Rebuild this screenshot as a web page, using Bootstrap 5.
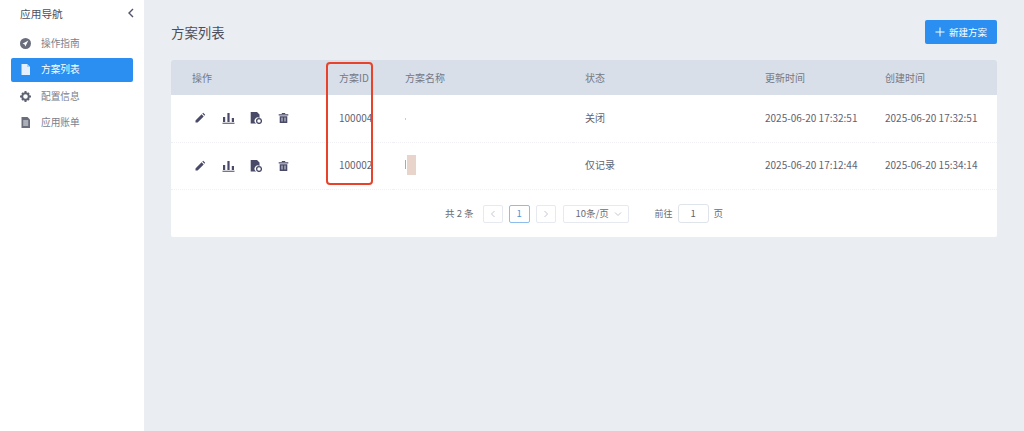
<!DOCTYPE html>
<html lang="zh-CN">
<head>
<meta charset="utf-8">
<title>方案列表</title>
<link href="https://cdn.jsdelivr.net/npm/bootstrap@5.3.0/dist/css/bootstrap.min.css" rel="stylesheet">
<style>
html,body{height:431px;overflow:hidden}
body{background:#eaeef3;font-family:"Noto Sans CJK SC","Noto Sans",sans-serif;font-size:10px;color:#5f6270}
.side-pane{width:144px;height:431px;background:#fff;flex:none}
.side-head{height:31px;padding:0 9px 3px 20px;color:#4d5060;font-size:10.7px}
.side-head svg{margin-top:-3px}
.side-menu{padding:0 11px}
.side-item{height:24px;padding-left:9px;gap:10px;border-radius:2px;color:#7b7e8a;font-size:9.7px;text-decoration:none;margin-bottom:2.5px}
.side-item.on{background:#2a8ff0;color:#fff}
.main-pane{padding:20px 27px 0 27px;position:relative;min-width:0}
.page-title{font-size:13.4px;color:#4a4d5c;font-weight:400;margin:0;line-height:24px}
.add-btn{width:72px;height:24px;padding:0;font-size:9.5px;background:#2a8ff0;border:0;border-radius:2px;gap:4px;color:#fff}
.sheet{background:#fff;margin-top:16px;border-radius:2px;height:177px;overflow:hidden}
.plan-table{table-layout:fixed;width:826px;margin:0;font-size:10px;color:#5f6270}
.plan-table th{background:#d9dfe9;height:35px;font-weight:400;color:#757885;padding:0 0 1px 12px;vertical-align:middle;border:0}
.plan-table td{height:47px;padding:0 0 2px 12px;vertical-align:middle;border:0;border-bottom:1px dotted #eef0f4;color:#5f6270;background:#fff}
.plan-table th:first-child{padding-left:21px}
.plan-table td:first-child{padding-left:23px;padding-bottom:0}
.op-set{gap:15.5px}
.op-set svg{display:block}
.blur-dot{display:inline-block;width:1px;height:2px;background:#c8ccd4;vertical-align:middle}
.blur-name{display:inline-flex;align-items:center}
.blur-name i{display:block;width:1px;height:9px;background:#a9a9ab;margin-right:1px}
.blur-name b{display:block;width:9px;height:20px;background:#e8d4ca}
.pager{height:48px;font-size:9.5px;color:#696c78;padding-left:274px}
.pg-box{height:18px;border:1px solid #e6e9ef;border-radius:2px;background:#fff}
.pg-arrow{width:20px;margin-left:9px;color:#c3c6cf}
.pg-num{width:21px;margin-left:6px;border-color:#8dbdec;color:#4f93d6}
.pg-next{margin-left:6px}
.pg-size{width:66px;margin-left:7px;padding:0 6px 0 12px;color:#696c78}
.pg-go{margin-left:26px;font-size:9px}
.pg-input{width:31px;margin-left:5px;border-color:#dfe3ea;color:#5f6270;border-radius:3px;height:19px}
.pg-unit{margin-left:5px}
.red-mark{position:absolute;left:182px;top:62px;width:47px;height:123px;border:2px solid #e8432a;border-radius:4px;pointer-events:none}
</style>
</head>
<body>
<div class="d-flex">
  <aside class="side-pane">
    <div class="side-head d-flex align-items-center justify-content-between">
      <span>应用导航</span>
      <svg width="8" height="10" viewBox="0 0 8 10"><path d="M6 1L2 5l4 4" fill="none" stroke="#50536a" stroke-width="1.4"/></svg>
    </div>
    <nav class="side-menu nav flex-column">
      <a class="side-item d-flex align-items-center" href="#">
        <svg width="11" height="11" viewBox="0 0 11 11"><circle cx="5.5" cy="5.5" r="5.5" fill="#6a6d7c"/><path d="M8.3 2.6L4.8 4.6 2.6 5.6l2 .8.8 2z" fill="#fff"/></svg>
        <span>操作指南</span>
      </a>
      <a class="side-item on d-flex align-items-center" href="#">
        <svg width="11" height="11" viewBox="0 0 11 11"><path d="M1.500 0h5.500L10 3v8H1.500z" fill="#e4f0fd"/><path d="M7 0l3 3H7z" fill="#a9d0f8"/></svg>
        <span>方案列表</span>
      </a>
      <a class="side-item d-flex align-items-center" href="#">
        <svg width="11" height="11" viewBox="0 0 11 11"><circle cx="5.5" cy="5.5" r="3.3" fill="none" stroke="#5f6270" stroke-width="2"/><path d="M4.5 0h2v2h-2zM4.500 9h2v2h-2zM0 4.500h2v2H0zM9 4.500h2v2H9zM1.300 2.700l1.400-1.400 1.200 1.200-1.400 1.400zM7.100 8.500l1.400-1.400 1.200 1.200-1.400 1.400zM8.300 1.300l1.400 1.400-1.200 1.200-1.400-1.400zM2.500 7.100l1.400 1.400-1.200 1.200-1.400-1.400z" fill="#5f6270"/></svg>
        <span>配置信息</span>
      </a>
      <a class="side-item d-flex align-items-center" href="#">
        <svg width="11" height="11" viewBox="0 0 11 11"><path d="M1.500 0h6L10 2.500V11H1.500z" fill="#6a6d7c"/><path d="M3.200 4h5M3.200 6h5M3.200 8h5" stroke="#fff" stroke-width=".9"/></svg>
        <span>应用账单</span>
      </a>
    </nav>
  </aside>
  <main class="main-pane flex-grow-1">
    <div class="d-flex justify-content-between align-items-center">
      <h1 class="page-title">方案列表</h1>
      <button type="button" class="btn add-btn d-flex align-items-center justify-content-center">
        <svg width="10" height="10" viewBox="0 0 10 10"><path d="M5 .5v9M.5 5h9" stroke="#fff" stroke-width="1"/></svg>
        <span>新建方案</span>
      </button>
    </div>
    <div class="sheet">
      <table class="table plan-table">
        <colgroup><col style="width:156px"><col style="width:66px"><col style="width:180px"><col style="width:180px"><col style="width:120px"><col style="width:124px"></colgroup>
        <thead><tr><th>操作</th><th>方案ID</th><th>方案名称</th><th>状态</th><th>更新时间</th><th>创建时间</th></tr></thead>
        <tbody>
          <tr>
            <td><div class="op-set d-flex align-items-center">
              <svg width="12" height="12" viewBox="0 0 12 12"><path d="M1.500 10.500V8.400L7.600 2.300l2.100 2.100-6.100 6.100zM8.300 1.600l.9-.8 2 2-.8.9z" fill="#484a68"/></svg>
              <svg width="13" height="12" viewBox="0 0 13 12"><path d="M1 5h2.200v5H1zM5.400 1h2.200v9H5.400zM9.800 6H12v4H9.800zM.5 10.800h12v1H.5z" fill="#484a68"/></svg>
              <svg width="12" height="12" viewBox="0 0 12 12"><path d="M.7 0H7l2.500 2.500V6a3.200 3.200 0 0 0-3.400 5.500H.7z" fill="#484a68"/><circle cx="9" cy="9" r="2.400" fill="none" stroke="#484a68" stroke-width="1.300"/></svg>
              <svg width="11" height="12" viewBox="0 0 11 12"><path d="M.7 2.300h9.600v1.200H.7zM3.800 1h3.400v1H3.800zM1.700 4.200h7.600V11H1.700z" fill="#484a68"/><path d="M4 5.500v4M7 5.500v4" stroke="#fff" stroke-width=".8"/></svg>
            </div></td>
            <td>100004</td>
            <td><span class="blur-dot"></span></td>
            <td>关闭</td>
            <td>2025-06-20 17:32:51</td>
            <td>2025-06-20 17:32:51</td>
          </tr>
          <tr>
            <td><div class="op-set d-flex align-items-center">
              <svg width="12" height="12" viewBox="0 0 12 12"><path d="M1.500 10.500V8.400L7.600 2.300l2.100 2.100-6.100 6.100zM8.300 1.600l.9-.8 2 2-.8.9z" fill="#484a68"/></svg>
              <svg width="13" height="12" viewBox="0 0 13 12"><path d="M1 5h2.200v5H1zM5.400 1h2.200v9H5.400zM9.800 6H12v4H9.800zM.5 10.800h12v1H.5z" fill="#484a68"/></svg>
              <svg width="12" height="12" viewBox="0 0 12 12"><path d="M.7 0H7l2.500 2.500V6a3.200 3.200 0 0 0-3.400 5.500H.7z" fill="#484a68"/><circle cx="9" cy="9" r="2.400" fill="none" stroke="#484a68" stroke-width="1.300"/></svg>
              <svg width="11" height="12" viewBox="0 0 11 12"><path d="M.7 2.300h9.600v1.200H.7zM3.800 1h3.400v1H3.800zM1.700 4.200h7.600V11H1.700z" fill="#484a68"/><path d="M4 5.500v4M7 5.500v4" stroke="#fff" stroke-width=".8"/></svg>
            </div></td>
            <td>100002</td>
            <td><span class="blur-name"><i></i><b></b></span></td>
            <td>仅记录</td>
            <td>2025-06-20 17:12:44</td>
            <td>2025-06-20 15:34:14</td>
          </tr>
        </tbody>
      </table>
      <div class="pager d-flex align-items-center">
        <span>共 2 条</span>
        <span class="pg-box pg-arrow d-flex align-items-center justify-content-center"><svg width="6" height="8" viewBox="0 0 6 8"><path d="M4.500 1L1.500 4l3 3" fill="none" stroke="currentColor"/></svg></span>
        <span class="pg-box pg-num d-flex align-items-center justify-content-center">1</span>
        <span class="pg-box pg-arrow pg-next d-flex align-items-center justify-content-center"><svg width="6" height="8" viewBox="0 0 6 8"><path d="M1.500 1l3 3-3 3" fill="none" stroke="currentColor"/></svg></span>
        <span class="pg-box pg-size d-flex align-items-center justify-content-between"><span>10条/页</span><svg width="8" height="6" viewBox="0 0 8 6"><path d="M1 1.500l3 3 3-3" fill="none" stroke="#c3c6cf"/></svg></span>
        <span class="pg-go">前往</span>
        <span class="pg-box pg-input d-flex align-items-center justify-content-center">1</span>
        <span class="pg-unit">页</span>
      </div>
    </div>
    <div class="red-mark"></div>
  </main>
</div>
<script src="https://cdn.jsdelivr.net/npm/bootstrap@5.3.0/dist/js/bootstrap.bundle.min.js"></script>
</body>
</html>
